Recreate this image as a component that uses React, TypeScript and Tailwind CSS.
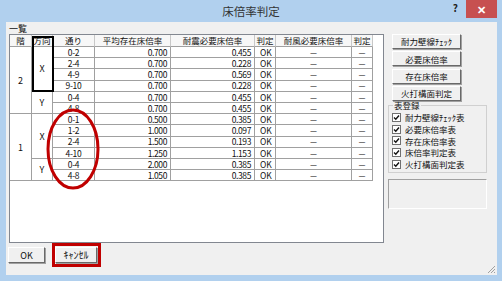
import React from "react";

type Row = { line: string; avg: string; seismic: string };

const floors: { floor: string; dirs: { dir: string; rows: Row[] }[] }[] = [
  {
    floor: "2",
    dirs: [
      {
        dir: "X",
        rows: [
          { line: "0-2", avg: "0.700", seismic: "0.455" },
          { line: "2-4", avg: "0.700", seismic: "0.228" },
          { line: "4-9", avg: "0.700", seismic: "0.569" },
          { line: "9-10", avg: "0.700", seismic: "0.228" },
        ],
      },
      {
        dir: "Y",
        rows: [
          { line: "0-4", avg: "0.700", seismic: "0.455" },
          { line: "4-8", avg: "0.700", seismic: "0.455" },
        ],
      },
    ],
  },
  {
    floor: "1",
    dirs: [
      {
        dir: "X",
        rows: [
          { line: "0-1", avg: "0.500", seismic: "0.385" },
          { line: "1-2", avg: "1.000", seismic: "0.097" },
          { line: "2-4", avg: "1.500", seismic: "0.193" },
          { line: "4-10", avg: "1.250", seismic: "1.153" },
        ],
      },
      {
        dir: "Y",
        rows: [
          { line: "0-4", avg: "2.000", seismic: "0.385" },
          { line: "4-8", avg: "1.050", seismic: "0.385" },
        ],
      },
    ],
  },
];

const headers = ["階", "方向", "通り", "平均存在床倍率", "耐震必要床倍率", "判定", "耐風必要床倍率", "判定"];
const registers = ["耐力壁線ﾁｪｯｸ表", "必要床倍率表", "存在床倍率表", "床倍率判定表", "火打構面判定表"];
const actions = ["耐力壁線ﾁｪｯｸ", "必要床倍率", "存在床倍率", "火打構面判定"];

const cell = "flex items-center border-r border-b border-[#a0a0a0]";

function WinButton({ label, className }: { label: string; className?: string }) {
  return (
    <button
      type="button"
      className={
        "flex items-center justify-center bg-[#f0f0f0] border border-t-white border-l-white border-b-[#696969] border-r-[#696969] shadow-[1px_1px_0_#a0a0a0] leading-none text-[#111] " +
        (className ?? "")
      }
    >
      {label}
    </button>
  );
}

function FloorTable() {
  return (
    <div className="relative grid grid-cols-[22px_21px_42px_76px_84px_21px_76px_21px] grid-rows-[12px_repeat(12,11.2px)] text-[8.5px] leading-none text-[#111]">
      {headers.map((h, i) => (
        <div key={i} className={cell + " justify-center bg-[#f7f7f7] border-r-[#c8c8c8]"}>
          {h}
        </div>
      ))}
      {floors.map((f) =>
        f.dirs.map((d, di) =>
          d.rows.map((r, ri) => (
            <React.Fragment key={f.floor + d.dir + r.line}>
              {di === 0 && ri === 0 ? (
                <div className={cell + " row-span-6 justify-center text-[9px]"}>{f.floor}</div>
              ) : null}
              {ri === 0 ? (
                <div className={cell + (d.rows.length === 4 ? " row-span-4" : " row-span-2") + " justify-center text-[9px]"}>
                  {d.dir}
                </div>
              ) : null}
              <div className={cell + " justify-center tracking-[-0.3px]"}>{r.line}</div>
              <div className={cell + " justify-end pr-[3px] tracking-[-0.4px]"}>{r.avg}</div>
              <div className={cell + " justify-end pr-[3px] tracking-[-0.4px]"}>{r.seismic}</div>
              <div className={cell + " pl-[5px]"}>OK</div>
              <div className={cell + " justify-center text-[#333]"}>－</div>
              <div className={cell + " justify-center text-[#333]"}>－</div>
            </React.Fragment>
          ))
        )
      )}
      <div className="absolute left-[22px] top-[1px] h-[56px] w-[22px] border-2 border-black" />
    </div>
  );
}

export default function App() {
  return (
    <div className="relative flex h-[281px] w-[502px] flex-col bg-[#b1d0ee] font-['MS_UI_Gothic','Noto_Sans_CJK_JP',sans-serif] text-[#111]">
      {/* title bar */}
      <div className="grid h-[22px] grid-cols-[1fr_auto_1fr]">
        <div />
        <div className="pt-[6px] text-[11.5px] leading-none text-[#333]">床倍率判定</div>
        <div className="flex items-start justify-end pr-[5px]">
          <span className="mr-[8px] mt-[3px] text-[10px] font-bold leading-none text-[#222]">?</span>
          <div className="flex h-[18px] w-[31px] items-center justify-center bg-[#c75050] text-[11px] font-bold leading-none text-white">
            ✕
          </div>
        </div>
      </div>

      {/* client area */}
      <div className="relative mb-[6px] ml-[6px] mr-[5px] flex flex-1 flex-col bg-[#f0f0f0] pl-[3px]">
        <div className="h-[12px] pt-[2px] text-[9px] leading-[9px]">一覧</div>

        <div className="flex">
          <div className="h-[209px] w-[375px] border border-[#828790] bg-white">
            <FloorTable />
          </div>

          <div className="ml-[4px] flex w-[99px] flex-col">
            <div className="flex flex-col gap-[2.3px] pl-[4px]">
              {actions.map((a) => (
                <WinButton key={a} label={a} className="h-[15px] w-[69px] text-[8.5px]" />
              ))}
            </div>

            <fieldset className="h-[72px] border border-[#d0d0d0] pl-[3px]">
              <legend className="ml-[1px] px-[1px] text-[8.5px] leading-[9px]">表登録</legend>
              <div className="flex flex-col gap-[2.7px] pt-[3px]">
                {registers.map((r) => (
                  <div key={r} className="flex items-center gap-[4px] text-[8.5px] leading-none">
                    <span className="flex h-[9px] w-[9px] items-center justify-center border border-[#707070] bg-white">
                      <svg width="7" height="7" viewBox="0 0 7 7">
                        <path d="M1 3.5 L2.8 5.3 L6 1.5" fill="none" stroke="#111" strokeWidth="1.4" />
                      </svg>
                    </span>
                    {r}
                  </div>
                ))}
              </div>
            </fieldset>

            <div className="mt-[6px] h-[30px] border border-l-[#a0a0a0] border-t-[#a0a0a0] border-r-white border-b-white" />
          </div>
        </div>

        <div className="flex items-center gap-[7px]">
          <WinButton label="OK" className="-ml-[1px] h-[16px] w-[37px] text-[9px]" />
          <div className="border-[3px] border-[#c00000] pb-[1px] pr-[1px] pt-[1px]">
            <WinButton label="ｷｬﾝｾﾙ" className="h-[16px] w-[42px] text-[10px]" />
          </div>
        </div>

        <svg className="absolute bottom-[1px] right-[1px]" width="10" height="10" viewBox="0 0 10 10">
          <path d="M9 2 L2 9 M9 5 L5 9 M9 8 L8 9" stroke="#a0a0a0" strokeWidth="1" />
        </svg>
      </div>

      {/* annotation ellipse */}
      <svg className="pointer-events-none absolute left-[46px] top-[108px]" width="54" height="82" viewBox="0 0 54 82">
        <ellipse cx="27" cy="41" rx="25" ry="39" fill="none" stroke="#c00000" strokeWidth="3" />
      </svg>
    </div>
  );
}
